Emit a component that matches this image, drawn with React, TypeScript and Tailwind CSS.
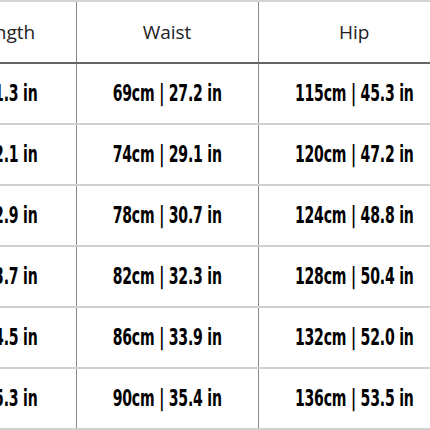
import React from 'react';

const rows = [
  { length: '105cm | 41.3 in', waist: '69cm | 27.2 in', hip: '115cm | 45.3 in' },
  { length: '107cm | 42.1 in', waist: '74cm | 29.1 in', hip: '120cm | 47.2 in' },
  { length: '109cm | 42.9 in', waist: '78cm | 30.7 in', hip: '124cm | 48.8 in' },
  { length: '111cm | 43.7 in', waist: '82cm | 32.3 in', hip: '128cm | 50.4 in' },
  { length: '113cm | 44.5 in', waist: '86cm | 33.9 in', hip: '132cm | 52.0 in' },
  { length: '115cm | 45.3 in', waist: '90cm | 35.4 in', hip: '136cm | 53.5 in' },
];

// condensed heavy figures, squeezed horizontally to look like the chart's poster font
const Val: React.FC<{ children: React.ReactNode; right?: boolean }> = ({ children, right }) => (
  <div className={`flex ${right ? 'justify-end pr-[38px]' : 'justify-center'}`}>
    <span className={`shrink-0 whitespace-nowrap scale-x-[0.68] ${right ? 'origin-right' : 'origin-center'}`}>
      {children}
    </span>
  </div>
);

const App: React.FC = () => {
  return (
    <div className="w-[430px] h-[430px] overflow-hidden bg-white">
      <table className="ml-[-66px] border-collapse table-fixed w-[516px] text-black">
        <colgroup>
          <col className="w-[142px]" />
          <col className="w-[182px]" />
          <col className="w-[192px]" />
        </colgroup>
        <thead className="font-['Open_Sans','DejaVu_Sans',sans-serif] text-[19px] text-[#222]">
          <tr className="h-[62px] border-t-2 border-t-[#d4d4d4] border-b-2 border-b-[#666]">
            <th className="font-normal border-r border-r-[#888]">Length</th>
            <th className="font-normal border-r border-r-[#888]">Waist</th>
            <th className="font-normal">Hip</th>
          </tr>
        </thead>
        <tbody className="font-['DejaVu_Sans_Condensed','DejaVu_Sans',sans-serif] font-bold text-[23px] tracking-[-0.3px]">
          {rows.map((r, i) => (
            <tr key={i} className="h-[61px] border-b-2 border-b-[#d0d0d0]">
              <td className="overflow-hidden border-r border-r-[#888]">
                <Val right>{r.length}</Val>
              </td>
              <td className="overflow-hidden border-r border-r-[#888]">
                <Val>{r.waist}</Val>
              </td>
              <td className="overflow-hidden">
                <Val>{r.hip}</Val>
              </td>
            </tr>
          ))}
        </tbody>
      </table>
    </div>
  );
};

export default App;
